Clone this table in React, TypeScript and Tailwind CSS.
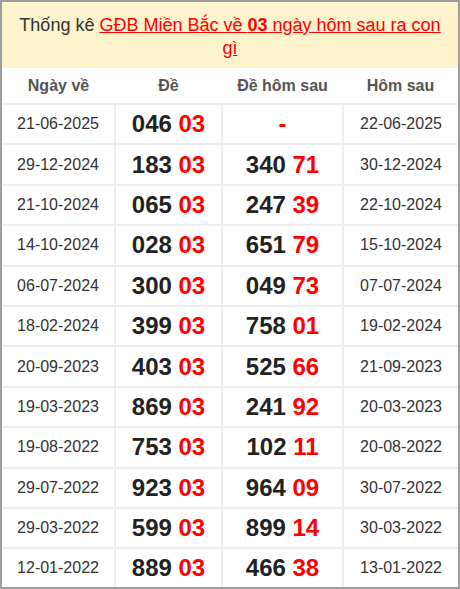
const rows: [string, string, string, string, string][] = [
  ["21-06-2025", "046", "", "", "22-06-2025"],
  ["29-12-2024", "183", "340", "71", "30-12-2024"],
  ["21-10-2024", "065", "247", "39", "22-10-2024"],
  ["14-10-2024", "028", "651", "79", "15-10-2024"],
  ["06-07-2024", "300", "049", "73", "07-07-2024"],
  ["18-02-2024", "399", "758", "01", "19-02-2024"],
  ["20-09-2023", "403", "525", "66", "21-09-2023"],
  ["19-03-2023", "869", "241", "92", "20-03-2023"],
  ["19-08-2022", "753", "102", "11", "20-08-2022"],
  ["29-07-2022", "923", "964", "09", "30-07-2022"],
  ["29-03-2022", "599", "899", "14", "30-03-2022"],
  ["12-01-2022", "889", "466", "38", "13-01-2022"],
];

export default function App() {
  return (
    <div className="w-[460px] h-[589px] overflow-hidden border-2 border-[#9e9e9e] bg-white font-['Liberation_Sans',Arial,sans-serif]">
      <div className="bg-[#fdf3cd] px-3 pt-[12px] pb-[8px] text-center text-[18px] leading-[23px] text-[#333]">
        Thống kê{" "}
        <a href="#" className="text-[#f00] underline">
          GĐB Miền Bắc về <b>03</b> ngày hôm sau ra con gì
        </a>
      </div>
      <table className="w-full border-collapse table-fixed">
        <colgroup>
          <col className="w-[113px]" />
          <col className="w-[107px]" />
          <col className="w-[121px]" />
          <col />
        </colgroup>
        <thead>
          <tr className="h-[36px] text-[16px] font-bold text-[#555]">
            <th className="border-b-2 border-[#eee]">Ngày về</th>
            <th className="border-b-2 border-[#eee]">Đề</th>
            <th className="border-b-2 border-[#eee]">Đề hôm sau</th>
            <th className="border-b-2 border-[#eee]">Hôm sau</th>
          </tr>
        </thead>
        <tbody>
          {rows.map(([d1, de, next, nextTail, d2]) => (
            <tr key={d1} className="h-[40.4px] text-center">
              <td className="border-r-2 border-b-2 border-[#eee] text-[16px] text-[#333]">{d1}</td>
              <td className="border-r-2 border-b-2 border-[#eee] text-[24px] font-bold text-[#222]">
                {de} <span className="text-[#f00]">03</span>
              </td>
              <td className="border-r-2 border-b-2 border-[#eee] text-[24px] font-bold text-[#222]">
                {next ? (
                  <>
                    {next} <span className="text-[#f00]">{nextTail}</span>
                  </>
                ) : (
                  <span className="text-[#f00]">-</span>
                )}
              </td>
              <td className="border-b-2 border-[#eee] text-[16px] text-[#333]">{d2}</td>
            </tr>
          ))}
        </tbody>
      </table>
    </div>
  );
}
